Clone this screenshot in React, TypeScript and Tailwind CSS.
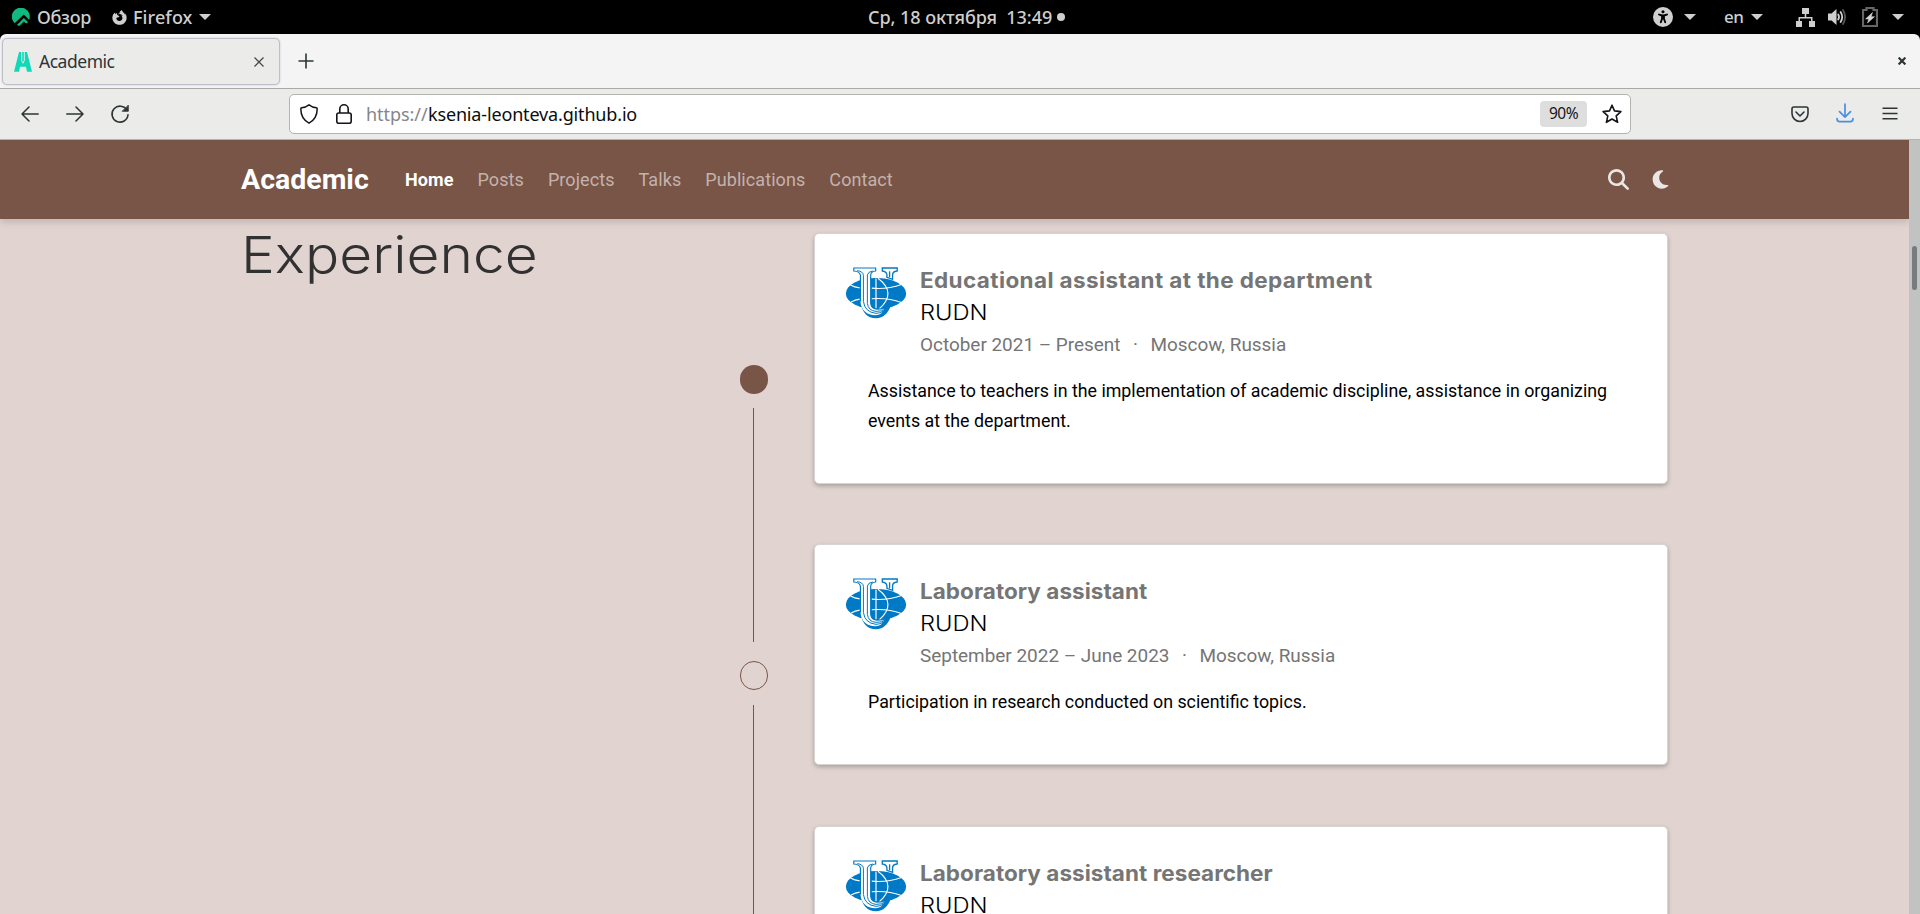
import React from 'react';
import { FaMagnifyingGlass, FaMoon, FaUniversalAccess, FaFirefoxBrowser } from 'react-icons/fa6';

const UI = "font-['Noto_Sans',sans-serif]";

function Caret({ className = '' }: { className?: string }) {
  return (
    <svg viewBox="0 0 12 6" className={'h-[6px] w-[12px] shrink-0 ' + className} fill="#cfcfcf">
      <path d="M0 0h12L6 6z" />
    </svg>
  );
}

function TopBar() {
  return (
    <header className={'flex h-[34px] shrink-0 items-center bg-black text-[18px] font-medium leading-[34px] text-[#cfcfcf] ' + UI}>
      <div className="flex w-[868px] items-center pl-[12px]">
        <svg viewBox="0 0 18 18" className="h-[18px] w-[18px]" fill="#10b981">
          <path d="M17.4 12.2A9 9 0 1 0 2.9 15.6L11.9 6.7l2.2 2.2z" transform="translate(-.2 -.3)" />
          <path d="M16.2 14.2l-4.3-4.2L4.9 17A9 9 0 0 0 7.4 17.9l4.5-4.4 2 2z" />
        </svg>
        <span className="ml-[7px] w-[55px] tracking-[-0.3px]">Обзор</span>
        <FaFirefoxBrowser className="ml-[20px] h-[15px] w-[15px]" />
        <span className="ml-[6px] w-[60px] tracking-[0.1px]">Firefox</span>
        <Caret className="ml-[6px]" />
      </div>
      <span className="whitespace-pre tracking-[-0.05px]">{'Ср, 18 октября  13:49'}</span>
      <span className="ml-[5px] h-[8px] w-[8px] rounded-full bg-[#cfcfcf]" />
      <div className="ml-auto flex items-center pr-[16px]">
        <FaUniversalAccess className="h-[20px] w-[20px]" />
        <Caret className="ml-[11px]" />
        <span className="ml-[28px] w-[20px] text-[17px] tracking-[-0.5px]">en</span>
        <Caret className="ml-[7px]" />
        <svg viewBox="0 0 19 19" className="ml-[33px] h-[19px] w-[19px]" fill="#cfcfcf">
          <path d="M6 0h7v6h-2.700v3h6.200v4H19v6h-6v-6h2v-2.500H4V13h2v6H0v-6h2.500V9H8.700V6H6z" />
        </svg>
        <svg viewBox="0 0 18 18" className="ml-[13px] h-[18px] w-[18px]" fill="none" strokeWidth="1.800" strokeLinecap="round">
          <path d="M0 5.500h3.500L8.500 1v16l-5-4.500H0z" fill="#cfcfcf" />
          <path d="M10.200 6.500q1.600 2.500 0 5M12.600 4q3.200 5 0 10" stroke="#cfcfcf" />
          <path d="M15 2q4.200 7 0 14" stroke="#555" />
        </svg>
        <svg viewBox="0 0 16 20" className="ml-[16px] h-[20px] w-[16px]">
          <path d="M4.500 1h7v2H15v16H1V3h3.500z" fill="none" stroke="#666" strokeWidth="2.200" />
          <path d="M10.500 5.500L3.500 12h3.200L5.500 16l7-6.300H9.200z" fill="#d4d4d4" stroke="#d4d4d4" strokeWidth=".5" />
        </svg>
        <Caret className="ml-[14px]" />
      </div>
    </header>
  );
}

function TabBar() {
  return (
    <div className="h-[55px] shrink-0 bg-black">
      <div className={'flex h-full items-center rounded-t-[6px] border-b border-[#a9a9a9] bg-[#f4f4f4] ' + UI}>
        <div className="mb-[1px] ml-[2px] mt-[2px] flex h-[47px] w-[278px] items-center rounded-[5px] border border-[#bfbdc9] bg-[#ebebea] pl-[11px] pr-[15px] shadow-[0_0_2px_rgba(120,120,160,0.4)]">
          <svg viewBox="0 0 18 20" className="h-[20px] w-[18px]" fill="#10d9b8">
            <path d="M5 0h2.200v8.600L9 12l1.800-3.400V0H13l5 19.700h-5l-1-5H6l-1 5H0z" />
            <path d="M8.200 0h1.600v9.500H8.200z" />
          </svg>
          <span className="ml-[7px] text-[17.500px] tracking-[-0.480px] text-[#2e3436]">Academic</span>
          <svg viewBox="0 0 10 10" className="ml-auto h-[10px] w-[10px]" stroke="#444" strokeWidth="1.200">
            <path d="M.5.500l9 9M9.500.500l-9 9" />
          </svg>
        </div>
        <svg viewBox="0 0 16 16" className="ml-[18px] h-[16px] w-[16px]" stroke="#2e3436" strokeWidth="1.600">
          <path d="M8 .5v15M.5 8h15" />
        </svg>
        <svg viewBox="0 0 8 8" className="ml-auto mr-[14px] h-[8px] w-[8px]" stroke="#2e3436" strokeWidth="2.200">
          <path d="M.6.6l6.800 6.800M7.400.6L.6 7.400" />
        </svg>
      </div>
    </div>
  );
}

function Toolbar() {
  return (
    <div className={'flex h-[51px] shrink-0 items-center border-b border-[#b3b3b0] bg-[#ebebea] ' + UI}>
      <svg viewBox="0 0 18 16" className="ml-[21px] h-[16px] w-[18px]" fill="none" stroke="#2e3436" strokeWidth="1.500" strokeLinecap="round" strokeLinejoin="round">
        <path d="M17.200 8H1M8 1L1 8l7 7" />
      </svg>
      <svg viewBox="0 0 18 16" className="ml-[27px] h-[16px] w-[18px]" fill="none" stroke="#2e3436" strokeWidth="1.500" strokeLinecap="round" strokeLinejoin="round">
        <path d="M.8 8H17M10 1l7 7-7 7" />
      </svg>
      <svg viewBox="0 0 20 20" className="ml-[26px] h-[20px] w-[20px]" fill="none" stroke="#2e3436" strokeWidth="1.600" strokeLinecap="round">
        <path d="M17 6.200A8 8 0 1 0 18 10.800" />
        <path d="M18.300 1.500v5.800h-5.800z" fill="#2e3436" strokeWidth=".8" strokeLinejoin="round" />
      </svg>
      <div className="ml-[159px] flex h-[40px] w-[1342px] items-center rounded-[5px] border border-[#b3b3b0] bg-white">
        <svg viewBox="0 0 18 20" className="ml-[10px] h-[20px] w-[18px]" fill="none" stroke="#15141a" strokeWidth="1.500" strokeLinejoin="round">
          <path d="M9 .8C11 2.300 14 3.500 16.400 3.800Q17.200 3.900 17.200 4.800C17.200 11.500 14 16.500 9 19.200 4 16.500.8 11.500.8 4.800Q.8 3.900 1.600 3.800C4 3.500 7 2.300 9 .8z" />
        </svg>
        <svg viewBox="0 0 16 20" className="ml-[18px] h-[20px] w-[16px]" fill="none" stroke="#15141a" strokeWidth="1.600">
          <rect x=".8" y="9" width="14.400" height="10.200" rx="2" />
          <path d="M3.800 9V5a4.200 4.200 0 0 1 8.400 0v4" />
        </svg>
        <span className="ml-[14px] w-[62px] text-[18px] tracking-[-0.05px] text-[#85858a]">https://</span>
        <span className="text-[18px] tracking-[-0.16px] text-[#0c0c0d]">ksenia-leonteva.github.io</span>
        <span className="ml-auto flex h-[26px] w-[47px] items-center justify-center rounded-[4px] bg-[#dedede] text-[15.500px] tracking-[-0.5px] text-[#15141a]">90%</span>
        <svg viewBox="0 0 20 20" className="ml-[15px] mr-[8px] h-[20px] w-[20px]" fill="none" stroke="#15141a" strokeWidth="1.600" strokeLinejoin="round">
          <path d="M10 1.200l2.500 5.700 6.400.7-4.700 4.200 1.400 6.500L10 15l-5.600 3.300 1.400-6.500L1.100 7.600l6.400-.7z" />
        </svg>
      </div>
      <svg viewBox="0 0 18 17" className="ml-auto h-[17px] w-[18px]" fill="none" stroke="#2e3436" strokeWidth="1.600" strokeLinecap="round" strokeLinejoin="round">
        <path d="M2.800 1h12.400Q17 1 17 2.800V7.500a8 8 0 0 1-16 0V2.800Q1 1 2.800 1z" />
        <path d="M5 6l4 4 4-4" />
      </svg>
      <svg viewBox="0 0 18 20" className="ml-[27px] mt-[-2px] h-[20px] w-[18px]" fill="none" stroke="#4a90e2" strokeWidth="1.700" strokeLinecap="round" strokeLinejoin="round">
        <path d="M9 1v13M3.500 8.700L9 14.200l5.500-5.500M1 15.500q0 3.200 2.600 3.200h10.800q2.600 0 2.600-3.200" />
      </svg>
      <svg viewBox="0 0 16 13" className="ml-[28px] mr-[22px] mt-[-2px] h-[13px] w-[16px]" stroke="#2e3436" strokeWidth="1.600">
        <path d="M.5 1.200h15M.5 6.500h15M.5 11.800h15" />
      </svg>
    </div>
  );
}

function NavBar() {
  return (
    <nav className="z-10 flex h-[79px] shrink-0 items-center bg-[#795548] pl-[241px] pr-[238px] text-[18px] text-[#c4b2ab] shadow-[0_4px_6px_rgba(0,0,0,0.12)]">
      <span className="w-[164px] pt-[2px] text-[28.500px] font-bold text-white">Academic</span>
      <div className="flex gap-[24px] tracking-[0.08px]">
        <span className="font-bold text-white">Home</span>
        <span>Posts</span>
        <span>Projects</span>
        <span>Talks</span>
        <span>Publications</span>
        <span>Contact</span>
      </div>
      <FaMagnifyingGlass className="ml-auto h-[21px] w-[21px] text-[#ebe5e3]" />
      <FaMoon className="ml-[21px] h-[21px] w-[21px] text-[#ebe5e3]" />
    </nav>
  );
}

function Crest() {
  return (
    <svg viewBox="16 23 186 157" className="h-[52px] w-[62px] shrink-0" fill="none">
      <ellipse cx="109" cy="103" rx="91" ry="47" fill="#0079c6" />
      <path d="M62 128Q70 178 109 178q33-2 46-42z" fill="#0079c6" />
      <g stroke="#fff" strokeWidth="3.500">
        <path d="M32 77q12 7 28 9M34 129q12-7 26-9M96 87q48 4 90-11M96 119q48-4 90 11" />
        <path d="M109 58v90M115 57q58 44 4 92" />
      </g>
      <path d="M128 26h45v9q-14 1-14 12v13l-17-6V46q-2-10-14-11z" fill="#fff" stroke="#0079c6" strokeWidth="4" />
      <path d="M150 36v18" stroke="#0079c6" strokeWidth="4" />
      <path d="M42 26h66v9q-14 1-15 12v86q2 16 18 17l24-1q-8 18-27 20-42-2-46-42V48q-2-12-20-13z" fill="#fff" />
      <path d="M62 127V48q-2-12-20-13v-9h66v9q-14 1-15 12v86q2 16 18 17l24-1" stroke="#0079c6" strokeWidth="3.500" />
      <path d="M52 34q18 2 19 14v79q4 32 38 36 24-2 38-20M99 35q-14 2-16 12v86q3 22 26 24 18 0 30-7" stroke="#0079c6" strokeWidth="3" />
    </svg>
  );
}

type Job = { title: string; titleClass: string; dates: string; text: string; cardClass: string };

const jobs: Job[] = [
  {
    title: 'Educational assistant at the department',
    titleClass: 'tracking-[0.37px]',
    dates: 'October 2021 – Present',
    text: 'Assistance to teachers in the implementation of academic discipline, assistance in organizing events at the department.',
    cardClass: 'h-[251px]',
  },
  {
    title: 'Laboratory assistant',
    titleClass: 'tracking-[0.05px]',
    dates: 'September 2022 – June 2023',
    text: 'Participation in research conducted on scientific topics.',
    cardClass: 'mt-[60px] h-[221px]',
  },
  {
    title: 'Laboratory assistant researcher',
    titleClass: 'tracking-[0.05px]',
    dates: '',
    text: '',
    cardClass: 'mt-[61px] h-[221px]',
  },
];

function JobCard({ job }: { job: Job }) {
  return (
    <article className={'shrink-0 rounded-[5px] border border-[#d8d4d3] bg-white pl-[30px] pt-[30px] shadow-[0_2px_4px_rgba(0,0,0,0.25)] ' + job.cardClass}>
      <div className="flex">
        <div className="pt-[3px]">
          <Crest />
        </div>
        <div className="ml-[12px] whitespace-nowrap pl-px">
          <h3 className={"origin-left scale-x-[1.07] pt-px font-['Inter',sans-serif] text-[21px] font-bold leading-[32px] text-[#757575] " + job.titleClass}>{job.title}</h3>
          <div className="origin-left scale-x-[1.13] font-['Inter',sans-serif] text-[21px] font-light leading-[32px] text-black">RUDN</div>
          {job.dates && (
            <div className="flex text-[18.930px] leading-[31px] text-[#757575]">
              <span>{job.dates}</span>
              <span className="w-[30px] text-center">·</span>
              <span>Moscow, Russia</span>
            </div>
          )}
        </div>
      </div>
      {job.text && <p className="ml-[23px] mt-[16px] w-[760px] text-[17.810px] leading-[30px] text-black">{job.text}</p>}
    </article>
  );
}

export default function App() {
  return (
    <div className="flex h-[914px] w-[1920px] flex-col overflow-hidden bg-[#e1d4d0] font-['Roboto',sans-serif]">
      <TopBar />
      <TabBar />
      <Toolbar />
      <div className="flex min-h-0 flex-1">
        <div className="flex w-[1909px] flex-col overflow-hidden">
          <NavBar />
          <main className="flex min-h-0 flex-1 pl-[241px]">
            <h1 className="w-[499px] origin-left scale-x-[1.115] pt-[5px] font-['Inter',sans-serif] text-[51px] font-light leading-[62px] text-[#313131]">Experience</h1>
            <div className="flex w-[28px] shrink-0 flex-col items-center pt-[146px]">
              <span className="h-[29px] w-[28px] shrink-0 rounded-full bg-[#795548]" />
              <span className="mr-px mt-[14px] h-[234px] w-px shrink-0 bg-[#795548]" />
              <span className="mt-[19px] h-[29px] w-[28px] shrink-0 rounded-full border border-[#795548]" />
              <span className="mr-px mt-[15px] h-[260px] w-px shrink-0 bg-[#795548]" />
            </div>
            <section className="ml-[46px] flex w-[854px] shrink-0 flex-col pt-[14px]">
              {jobs.map((job) => (
                <JobCard key={job.title} job={job} />
              ))}
            </section>
          </main>
        </div>
        <div className="flex w-[11px] justify-center bg-[#c1c3c2] pt-[106px]">
          <span className="h-[44px] w-[5px] rounded-full bg-[#777b7d]" />
        </div>
      </div>
    </div>
  );
}
